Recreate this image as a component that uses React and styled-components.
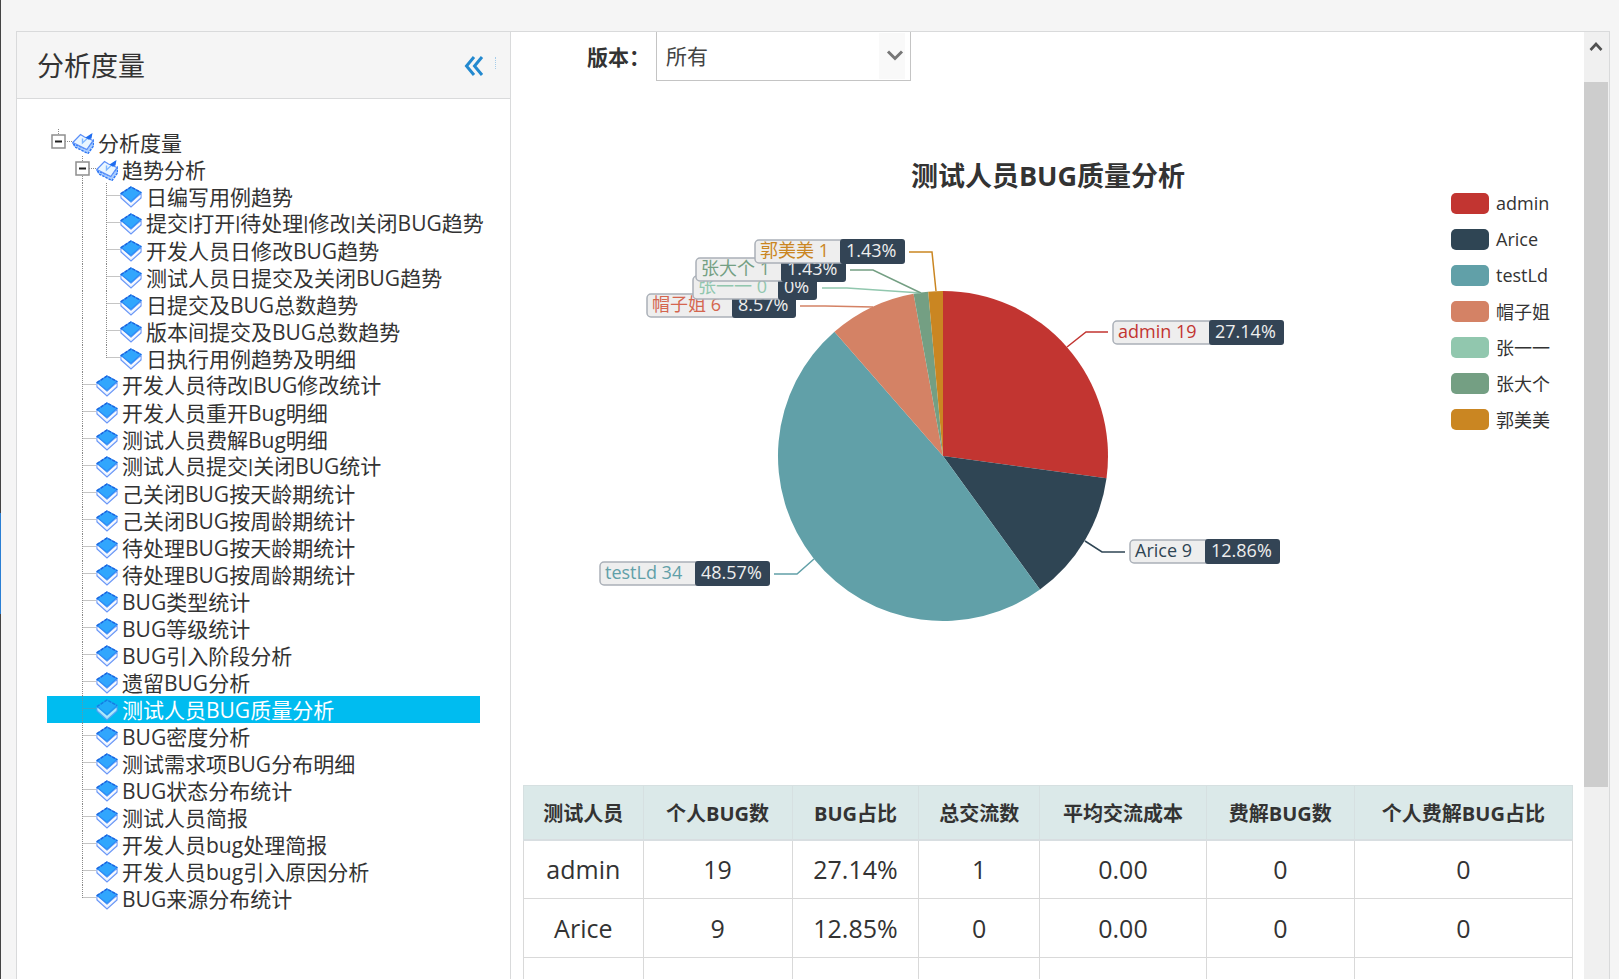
import React from 'react';
import styled, { createGlobalStyle, css } from 'styled-components';

const GlobalStyle = createGlobalStyle`
  *, *::before, *::after { box-sizing: border-box; }
  html, body { margin: 0; padding: 0; }
  body {
    background: #f5f5f5;
    color: #333;
    font-family: "Open Sans", "Noto Sans CJK SC", sans-serif;
    font-size: 21px;
  }
  h1, h2, ul, p { margin: 0; padding: 0; }
  ul { list-style: none; }
`;

/* ---------- page frame ---------- */

const Page = styled.div`
  display: flex;
  height: 100vh;
  overflow: hidden;
`;

const WindowEdge = styled.div`
  flex: none;
  width: 1px;
  background: linear-gradient(#444 52.4%, #2a7fd4 52.4%, #2a7fd4 62.7%, #444 62.7%);
`;

const Frame = styled.div`
  flex: 1;
  min-width: 0;
  display: flex;
  margin: 31px 9px 0 15px;
  border: 1px solid #d9dadb;
  border-bottom: 0;
  background: #fff;
`;

/* ---------- sidebar ---------- */

const Sidebar = styled.aside`
  flex: none;
  width: 494px;
  border-right: 1px solid #d9dadb;
  overflow: hidden;
`;

const SidebarHeader = styled.header`
  display: flex;
  align-items: center;
  height: 67px;
  padding: 2px 14px 0 20px;
  border-bottom: 1px solid #d9dadb;
  background: #f5f5f5;
`;

const SidebarTitle = styled.h1`
  flex: 1;
  font-size: 27px;
  line-height: 40px;
  font-weight: 400;
`;

const CollapseButton = styled.button`
  display: flex;
  padding: 0;
  border: 0;
  background: none;
  cursor: pointer;
`;

const Grip = styled.span`
  height: 12px;
  margin: 0 0 6px 11px;
  border-left: 1px dotted #a5cdea;
`;

const Tree = styled.ul`
  padding: 30px;
`;

const TreeLink = styled.a`
  display: flex;
  align-items: center;
  height: 27px;
  padding-left: 1px;
  color: ${(p) => (p.$selected ? '#fff' : '#333')};
  background: ${(p) => (p.$selected ? '#00bcf0' : 'transparent')};
  line-height: 27px;
  white-space: nowrap;
  text-decoration: none;

  svg { flex: none; }
  ${(p) => p.$selected && css`
    svg { opacity: 0.7; }
  `}
`;

const TreeLabel = styled.span`
  padding: 1px 0 0 4px;
`;

const Pipe = styled.span`
  font-family: Roboto, sans-serif;
`;

/* ---------- content ---------- */

const Content = styled.main`
  flex: 1;
  min-width: 0;
  overflow: hidden;
  padding: 0 11px 0 12px;
`;

const Toolbar = styled.div`
  display: flex;
  align-items: center;
  height: 49px;
  padding-left: 64px;
`;

const FieldLabel = styled.label`
  width: 69px;
  font-weight: 700;
  line-height: 30px;
  white-space: nowrap;
`;

const SelectBox = styled.div`
  display: grid;
  grid-template-columns: 1fr 26px 5px;
  align-items: center;
  width: 255px;
  height: 49px;
  border: 1px solid #c4c4c4;
  border-top: 0;
`;

const Select = styled.select`
  grid-area: 1 / 1 / 2 / 4;
  height: 48px;
  padding: 0 9px;
  border: 0;
  appearance: none;
  background: transparent;
  color: #444;
  font: inherit;
`;

const SelectArrow = styled.span`
  grid-area: 1 / 2;
  display: flex;
  align-items: center;
  justify-content: flex-end;
  height: 46px;
  padding-right: 1px;
  background: #f9f9f9;
  pointer-events: none;
`;

const Chart = styled.figure`
  display: grid;
  grid-template-rows: 704px;
  margin: 0;
`;

const ChartTitle = styled.h2`
  grid-area: 1 / 1;
  justify-self: center;
  padding-top: 75px;
  font-size: 27px;
  line-height: 40px;
  font-weight: 700;
`;

const Plot = styled.svg`
  grid-area: 1 / 1;
  width: 100%;
  height: 100%;
  font-size: 18px;
`;

const Legend = styled.ul`
  grid-area: 1 / 1;
  justify-self: end;
  align-self: start;
  width: 122px;
  padding-top: 104px;
`;

const LegendItem = styled.li`
  display: flex;
  align-items: center;
  gap: 7px;
  height: 36px;
  font-size: 18px;
  white-space: nowrap;
`;

const Swatch = styled.span`
  width: 38px;
  height: 21px;
  border-radius: 5px;
  background: ${(p) => p.$color};
`;

const Table = styled.table`
  width: 100%;
  border-collapse: collapse;
  table-layout: fixed;
  text-align: center;
`;

const Col = styled.col`
  width: ${(p) => p.$share}%;
`;

const HeadCell = styled.th`
  height: 54px;
  padding: 0;
  border: 1px solid #d6e0e1;
  border-bottom: 2px solid #d8dee1;
  background: #dbe9e9;
  font-size: 20px;
  font-weight: 700;
  white-space: nowrap;
`;

const Cell = styled.td`
  height: 59px;
  padding: 0;
  border: 1px solid #d9d9d9;
  font-size: 25px;
`;

/* ---------- scroll bar ---------- */

const ScrollTrack = styled.div`
  flex: none;
  display: flex;
  flex-direction: column;
  width: 25px;
  padding-right: 1px;
  background: #f0f0f0;
`;

const ScrollButton = styled.button`
  display: flex;
  justify-content: center;
  height: 50px;
  padding: 8px 0 0;
  border: 0;
  background: none;
`;

const ScrollThumb = styled.div`
  flex: 0 0 74.4%;
  background: #cdcdcd;
`;

/* ---------- icons ---------- */

const DoubleChevron = () => (
  <svg width="20" height="22" viewBox="0 0 20 22" fill="none" stroke="#2389cf" strokeWidth="3">
    <path d="M10 2 2.500 11l7.500 9M18 2 10.500 11l7.500 9" />
  </svg>
);

const LeafIcon = () => (
  <svg width="22" height="22" viewBox="0 0 22 22">
    <path d="M1 8v4l10 9 10-9V8l-10 9z" fill="#eaf2ff" stroke="#6a97f7" strokeWidth="1.200" />
    <path d="M11 1 21 6.500 11 15.500 1 7.500z" fill="#31a6fd" stroke="#2b8af5" strokeWidth="1.200" />
    <path d="M1 7.500 11 1 21 6.500" fill="none" stroke="#1c63dc" strokeWidth="1.400" strokeDasharray="3 1.5" />
    <path d="M1.500 9.500 11 17.800l9.500-8.300" fill="none" stroke="#fff" strokeWidth="1.200" />
  </svg>
);

const FolderIcon = () => (
  <svg width="22" height="22" viewBox="0 0 22 22">
    <path d="M1.500 12 3 15l13 6.500L21.500 14V8.500L14.500 17z" fill="#a9cdff" stroke="#2f78f5" strokeWidth="1.400" strokeDasharray="2.500 1" />
    <path d="M.8 10.500 8.500 2.500l4 2.500 8.500 3.500L14.800 17.500z" fill="#eaf6ff" stroke="#5b8ff8" strokeWidth="1.200" />
    <path d="M10.500 6.500v4.500L19.500 2.500" fill="none" stroke="#7eb6ff" strokeWidth="1.400" />
    <path d="M13.500 5.500 20.500 1l-1 5.500-3 1z" fill="#1f6cf0" />
  </svg>
);

const guidePaths = {
  root: 'M10.500 0v5M17 12.500h7',
  open: 'M10.500 0v27M17 12.500h7',
  line: 'M10.500 0v27',
  tee: 'M10.500 0v27M10.500 12.500H24',
  elbow: 'M10.500 0v13M10.500 12.500H24',
  blank: '',
};

const Guide = ({ kind }) => (
  <svg width="24" height="27" viewBox="0 0 24 27" fill="none">
    <path d={guidePaths[kind]} stroke="#8a8a8a" strokeDasharray="1 1" />
    {(kind === 'root' || kind === 'open') && (
      <>
        <rect x="4" y="6" width="13" height="13" fill="#fff" stroke="#8e8e8e" strokeWidth="1.500" />
        <path d="M7 12.500h7" stroke="#222" strokeWidth="2" />
      </>
    )}
  </svg>
);

/* ---------- data ---------- */

const trendItems = [
  '日编写用例趋势',
  '提交|打开|待处理|修改|关闭BUG趋势',
  '开发人员日修改BUG趋势',
  '测试人员日提交及关闭BUG趋势',
  '日提交及BUG总数趋势',
  '版本间提交及BUG总数趋势',
  '日执行用例趋势及明细',
];

const reportItems = [
  '开发人员待改|BUG修改统计',
  '开发人员重开Bug明细',
  '测试人员费解Bug明细',
  '测试人员提交|关闭BUG统计',
  '己关闭BUG按天龄期统计',
  '己关闭BUG按周龄期统计',
  '待处理BUG按天龄期统计',
  '待处理BUG按周龄期统计',
  'BUG类型统计',
  'BUG等级统计',
  'BUG引入阶段分析',
  '遗留BUG分析',
  '测试人员BUG质量分析',
  'BUG密度分析',
  '测试需求项BUG分布明细',
  'BUG状态分布统计',
  '测试人员简报',
  '开发人员bug处理简报',
  '开发人员bug引入原因分析',
  'BUG来源分布统计',
];

const SELECTED = '测试人员BUG质量分析';

const treeRows = [
  { text: '分析度量', guides: ['root'], folder: true },
  { text: '趋势分析', guides: ['blank', 'open'], folder: true },
  ...trendItems.map((text, i) => ({
    text,
    guides: ['blank', 'line', i === trendItems.length - 1 ? 'elbow' : 'tee'],
  })),
  ...reportItems.map((text, i) => ({
    text,
    guides: ['blank', i === reportItems.length - 1 ? 'elbow' : 'tee'],
  })),
];

/* Label and leader coordinates are relative to the centre of the pie. */
const series = [
  { name: 'admin', value: 19, pct: '27.14%', color: '#c23531', x: 169, y: -136, w: 172, split: 97, leader: '124,-109 143,-124 165,-124' },
  { name: 'Arice', value: 9, pct: '12.86%', color: '#2f4554', x: 186, y: 83, w: 151, split: 76, leader: '142,85 159,96 182,96' },
  { name: 'testLd', value: 34, pct: '48.57%', color: '#61a0a8', x: -344, y: 105, w: 171, split: 96, leader: '-129,103 -146,118 -169,118' },
  { name: '帽子姐', value: 6, pct: '8.57%', color: '#d48265', text: '#d4664f', x: -297, y: -163, w: 150, split: 86, leader: '-70,-149 -118,-150 -143,-150' },
  { name: '张一一', value: 0, pct: '0%', color: '#91c7ae', x: -251, y: -181, w: 125, split: 86, leader: '-22,-163 -96,-168 -121,-168' },
  { name: '张大个', value: 1, pct: '1.43%', color: '#749f83', x: -248, y: -199, w: 151, split: 86, leader: '-22,-163 -70,-186 -93,-186' },
  { name: '郭美美', value: 1, pct: '1.43%', color: '#ca8622', x: -189, y: -217, w: 151, split: 86, leader: '-7,-165 -11,-204 -34,-204' },
];

const RADIUS = 165;
const total = series.reduce((sum, s) => sum + s.value, 0);

const pointAt = (share) => {
  const a = share * 2 * Math.PI;
  return `${(RADIUS * Math.sin(a)).toFixed(2)} ${(-RADIUS * Math.cos(a)).toFixed(2)}`;
};

const slices = series.map((s, i) => {
  const before = series.slice(0, i).reduce((sum, t) => sum + t.value, 0);
  return {
    ...s,
    d: `M0 0L${pointAt(before / total)}A${RADIUS} ${RADIUS} 0 0 1 ${pointAt((before + s.value) / total)}Z`,
  };
});

const columns = [
  ['测试人员', 11.4],
  ['个人BUG数', 14.2],
  ['BUG占比', 12.1],
  ['总交流数', 11.5],
  ['平均交流成本', 15.9],
  ['费解BUG数', 14.1],
  ['个人费解BUG占比', 20.8],
];

const rows = [
  ['admin', '19', '27.14%', '1', '0.00', '0', '0'],
  ['Arice', '9', '12.85%', '0', '0.00', '0', '0'],
  ['', '', '', '', '', '', ''],
];

/* ---------- parts ---------- */

const withPipes = (text) =>
  text.split('|').map((part, i) => (
    <React.Fragment key={i}>
      {i > 0 && <Pipe>|</Pipe>}
      {part}
    </React.Fragment>
  ));

const SliceLabel = ({ s }) => (
  <g>
    <polyline points={s.leader} fill="none" stroke={s.color} strokeWidth="1.500" />
    <rect x={s.x + 1} y={s.y + 1} width={s.w - 2} height="23" rx="4" fill="#eee" stroke="#aab0b8" strokeWidth="1.500" />
    <rect x={s.x + s.split} y={s.y} width={s.w - s.split} height="25" rx="3" fill="#334455" />
    <text x={s.x + 6} y={s.y + 18} fill={s.text || s.color}>{`${s.name} ${s.value}`}</text>
    <text x={s.x + s.split + 6} y={s.y + 18} fill="#eee">{s.pct}</text>
  </g>
);

export default function App() {
  return (
    <>
      <GlobalStyle />
      <Page>
        <WindowEdge />
        <Frame>
          <Sidebar>
            <SidebarHeader>
              <SidebarTitle>分析度量</SidebarTitle>
              <CollapseButton type="button" aria-label="收起">
                <DoubleChevron />
              </CollapseButton>
              <Grip />
            </SidebarHeader>
            <Tree>
              {treeRows.map((row) => (
                <li key={row.text + row.guides.length}>
                  <TreeLink href="#" $selected={row.text === SELECTED}>
                    {row.guides.map((kind, i) => <Guide key={i} kind={kind} />)}
                    {row.folder ? <FolderIcon /> : <LeafIcon />}
                    <TreeLabel>{withPipes(row.text)}</TreeLabel>
                  </TreeLink>
                </li>
              ))}
            </Tree>
          </Sidebar>

          <Content>
            <Toolbar>
              <FieldLabel htmlFor="version">版本：</FieldLabel>
              <SelectBox>
                <SelectArrow>
                  <svg width="18" height="12" viewBox="0 0 18 12" fill="none" stroke="#777" strokeWidth="3">
                    <path d="M2 1.500l7 7 7-7" />
                  </svg>
                </SelectArrow>
                <Select id="version" defaultValue="所有">
                  <option>所有</option>
                </Select>
              </SelectBox>
            </Toolbar>

            <Chart>
              <ChartTitle>测试人员BUG质量分析</ChartTitle>
              <Plot>
                <svg x="40%" y="375" overflow="visible">
                  {slices.map((s) => <path key={s.name} d={s.d} fill={s.color} />)}
                  {slices.map((s) => <SliceLabel key={s.name} s={s} />)}
                </svg>
              </Plot>
              <Legend>
                {series.map((s) => (
                  <LegendItem key={s.name}>
                    <Swatch $color={s.color} />
                    {s.name}
                  </LegendItem>
                ))}
              </Legend>
            </Chart>

            <Table>
              <colgroup>
                {columns.map(([name, share]) => <Col key={name} $share={share} />)}
              </colgroup>
              <thead>
                <tr>{columns.map(([name]) => <HeadCell key={name} scope="col">{name}</HeadCell>)}</tr>
              </thead>
              <tbody>
                {rows.map((cells, r) => (
                  <tr key={r}>{cells.map((cell, c) => <Cell key={c}>{cell}</Cell>)}</tr>
                ))}
              </tbody>
            </Table>
          </Content>

          <ScrollTrack>
            <ScrollButton type="button" aria-label="向上滚动">
              <svg width="14" height="13" viewBox="0 0 14 13" fill="none" stroke="#505050" strokeWidth="2.600">
                <path d="M1.500 10 7 4l5.500 6" />
              </svg>
            </ScrollButton>
            <ScrollThumb />
          </ScrollTrack>
        </Frame>
      </Page>
    </>
  );
}
